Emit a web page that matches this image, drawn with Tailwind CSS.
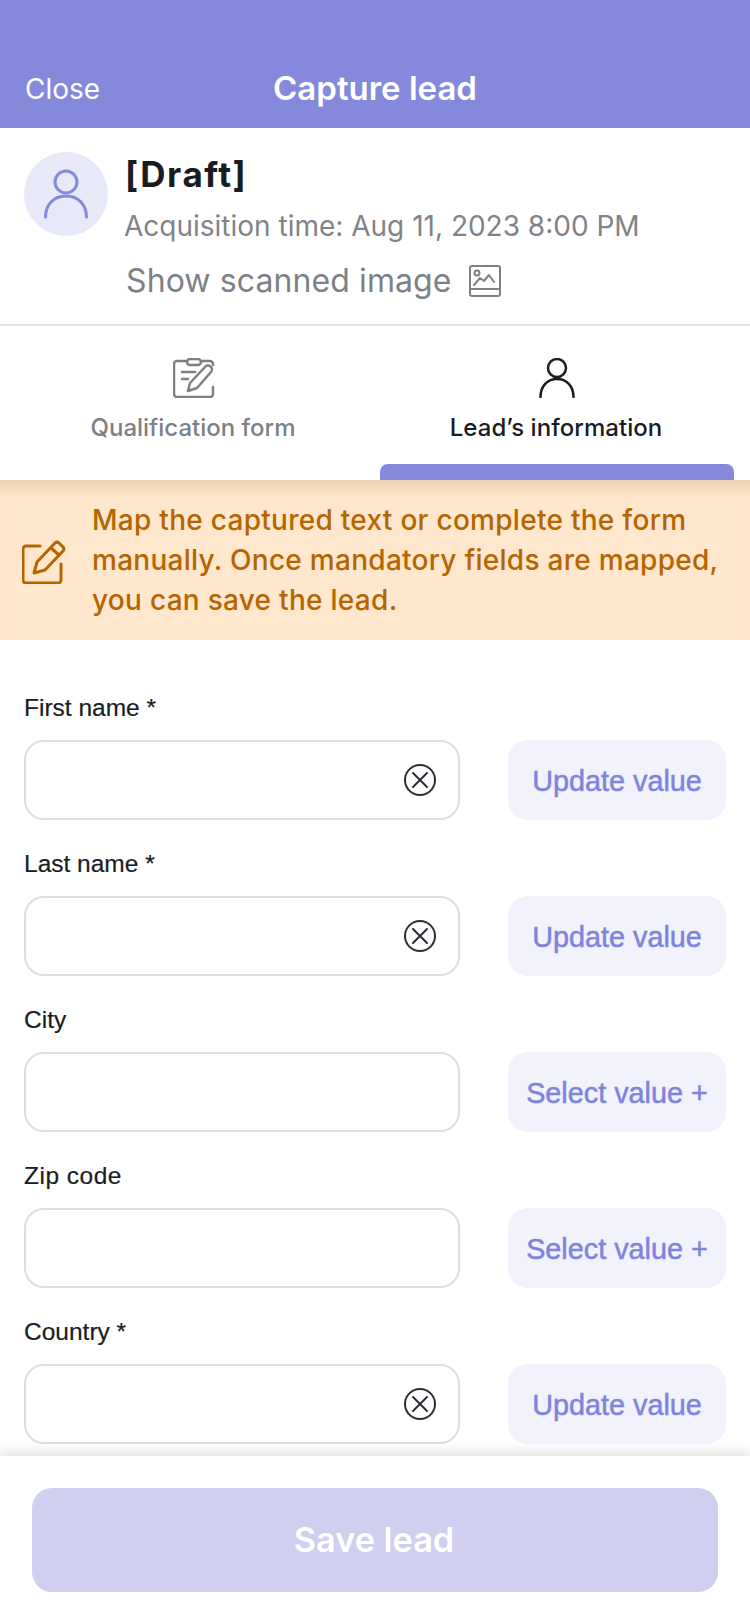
<!DOCTYPE html>
<html lang="en">
<head>
<meta charset="utf-8">
<title>Capture lead</title>
<script src="https://cdn.jsdelivr.net/npm/@tailwindcss/browser@4"></script>
</head>
<body class="bg-white">
<div class="relative w-[750px] h-[1624px] overflow-hidden flex flex-col bg-white font-['Inter',sans-serif]">
  <header class="h-[128px] shrink-0 bg-[#8489dc] text-white relative flex items-end justify-center pb-[20px]">
    <span class="absolute left-[25px] bottom-[21px] text-[28px] leading-[36px]">Close</span>
    <h1 class="text-[33px] leading-[40px] font-semibold">Capture lead</h1>
  </header>

  <section class="h-[198px] shrink-0 border-b-2 border-[#e2e3e5] flex items-start pl-[24px] pt-[24px] gap-[16px]">
    <div class="w-[84px] h-[84px] rounded-full bg-[#e7e8f8] shrink-0 flex items-center justify-center">
      <svg width="46" height="50" viewBox="0 0 46 50" fill="none" stroke="#8489dc" stroke-width="3" stroke-linecap="round"><circle cx="23" cy="13" r="11"/><path d="M2.500 48c0-12 8-21 20.500-21s20.500 9 20.500 21"/></svg>
    </div>
    <div class="flex flex-col">
      <div class="text-[35px] leading-[44px] font-bold text-[#1a1c1f] pl-[1px] tracking-[1.500px]">[Draft]</div>
      <div class="text-[28px] leading-[36px] text-[#808488] mt-[12px]">Acquisition time: Aug 11, 2023 8:00 PM</div>
      <div class="flex items-center gap-[17px] mt-[17px] pl-[2px]">
        <span class="text-[32px] leading-[40px] text-[#7d8185] tracking-[0.1px]">Show scanned image</span>
        <svg width="32" height="32" viewBox="0 0 32 32" fill="none" stroke="#7d8185" stroke-width="2" stroke-linecap="round" stroke-linejoin="round"><rect x="1" y="1" width="30" height="30" rx="2"/><path d="M1 24h30"/><circle cx="8" cy="8" r="2.500"/><path d="M5 20l6-7 4 3 5-6 5 7"/></svg>
      </div>
    </div>
  </section>

  <nav class="h-[154px] shrink-0 flex gap-[10px] px-[16px]">
    <div class="w-[354px] flex flex-col items-center pt-[32px]">
      <svg class="ml-[2px]" width="42" height="40" viewBox="0 0 42 40" fill="none" stroke="#7d8185" stroke-width="2.500" stroke-linecap="round" stroke-linejoin="round"><path d="M13 3H4a3 3 0 0 0-3 3v30a3 3 0 0 0 3 3h33a3 3 0 0 0 3-3v-7"/><path d="M29 3h8a3 3 0 0 1 3 3v1"/><rect x="14" y="1" width="14" height="6" rx="3"/><path d="M9 14h13M9 21h6"/><path d="M15 33l2-8 15-16a3 3 0 0 1 6 5L24 30z"/></svg>
      <span class="text-[24px] leading-[32px] font-medium text-[#7d8185] mt-[14px]">Qualification form</span>
    </div>
    <div class="w-[354px] flex flex-col items-center pt-[32px] relative">
      <svg width="36" height="40" viewBox="0 0 36 40" fill="none" stroke="#1a1c1f" stroke-width="2.500" stroke-linecap="round"><circle cx="18" cy="10" r="9"/><path d="M1.500 39c0-11 7-18 16.500-18s16.500 7 16.500 18"/></svg>
      <span class="text-[24px] leading-[32px] font-medium text-[#1a1c1f] mt-[14px] mr-[2px] tracking-[0.05px]">Lead’s information</span>
      <div class="absolute left-0 right-0 bottom-0 h-[16px] bg-[#8489dc] rounded-t-[8px]"></div>
    </div>
  </nav>

  <section class="h-[160px] shrink-0 bg-[#fee7cc] shadow-[inset_0_18px_14px_-12px_rgba(120,90,50,0.2)] flex items-center pl-[22px] gap-[26px]">
    <svg class="shrink-0 mt-[4px]" width="44" height="44" viewBox="0 0 44 44" fill="none" stroke="#b56500" stroke-width="3" stroke-linecap="round" stroke-linejoin="round"><path d="M18 6H4a3 3 0 0 0-3 3v31a3 3 0 0 0 3 3h32a3 3 0 0 0 3-3V24"/><path d="M12 33l3-11L33 3a3 3 0 0 1 4 0l4 4a3 3 0 0 1 0 4L23 30z"/><path d="M29 8l8 7"/></svg>
    <p class="text-[28px] leading-[40px] font-[550] text-[#b56500] tracking-[0.28px] whitespace-nowrap">Map the captured text or complete the form<br>manually. Once mandatory fields are mapped,<br>you can save the lead.</p>
  </section>

  <main class="flex-1 min-h-0 overflow-hidden px-[24px] pt-[48px] flex flex-col gap-[24px] font-['Liberation_Sans',sans-serif]">
    <div>
      <label class="block text-[24.500px] leading-[40px] text-[#1a1c1f] [-webkit-text-stroke:0.2px_#1a1c1f]">First name *</label>
      <div class="flex items-stretch justify-between mt-[12px] h-[80px]">
        <div class="w-[436px] rounded-[20px] border-2 border-[#dedede] flex items-center justify-end pr-[22px]">
          <svg width="32" height="32" viewBox="0 0 32 32" fill="none" stroke="#2a2f36" stroke-width="2" stroke-linecap="round"><circle cx="16" cy="16" r="15"/><path d="M9 9l14 14M23 9L9 23"/></svg>
        </div>
        <div class="w-[218px] rounded-[20px] bg-[#f1f2fb] flex items-center justify-center pt-[4px] text-[28.800px] text-[#7f83dc] [-webkit-text-stroke:0.5px_#7f83dc]">Update value</div>
      </div>
    </div>
    <div>
      <label class="block text-[24.500px] leading-[40px] text-[#1a1c1f] [-webkit-text-stroke:0.2px_#1a1c1f]">Last name *</label>
      <div class="flex items-stretch justify-between mt-[12px] h-[80px]">
        <div class="w-[436px] rounded-[20px] border-2 border-[#dedede] flex items-center justify-end pr-[22px]">
          <svg width="32" height="32" viewBox="0 0 32 32" fill="none" stroke="#2a2f36" stroke-width="2" stroke-linecap="round"><circle cx="16" cy="16" r="15"/><path d="M9 9l14 14M23 9L9 23"/></svg>
        </div>
        <div class="w-[218px] rounded-[20px] bg-[#f1f2fb] flex items-center justify-center pt-[4px] text-[28.800px] text-[#7f83dc] [-webkit-text-stroke:0.5px_#7f83dc]">Update value</div>
      </div>
    </div>
    <div>
      <label class="block text-[24.500px] leading-[40px] text-[#1a1c1f] [-webkit-text-stroke:0.2px_#1a1c1f]">City</label>
      <div class="flex items-stretch justify-between mt-[12px] h-[80px]">
        <div class="w-[436px] rounded-[20px] border-2 border-[#dedede]"></div>
        <div class="w-[218px] rounded-[20px] bg-[#f1f2fb] flex items-center justify-center pt-[4px] text-[28.800px] text-[#7f83dc] [-webkit-text-stroke:0.5px_#7f83dc] whitespace-nowrap">Select value +</div>
      </div>
    </div>
    <div>
      <label class="block text-[24.500px] leading-[40px] text-[#1a1c1f] [-webkit-text-stroke:0.2px_#1a1c1f] tracking-[0.5px]">Zip code</label>
      <div class="flex items-stretch justify-between mt-[12px] h-[80px]">
        <div class="w-[436px] rounded-[20px] border-2 border-[#dedede]"></div>
        <div class="w-[218px] rounded-[20px] bg-[#f1f2fb] flex items-center justify-center pt-[4px] text-[28.800px] text-[#7f83dc] [-webkit-text-stroke:0.5px_#7f83dc] whitespace-nowrap">Select value +</div>
      </div>
    </div>
    <div>
      <label class="block text-[24.500px] leading-[40px] text-[#1a1c1f] [-webkit-text-stroke:0.2px_#1a1c1f]">Country *</label>
      <div class="flex items-stretch justify-between mt-[12px] h-[80px]">
        <div class="w-[436px] rounded-[20px] border-2 border-[#dedede] flex items-center justify-end pr-[22px]">
          <svg width="32" height="32" viewBox="0 0 32 32" fill="none" stroke="#2a2f36" stroke-width="2" stroke-linecap="round"><circle cx="16" cy="16" r="15"/><path d="M9 9l14 14M23 9L9 23"/></svg>
        </div>
        <div class="w-[218px] rounded-[20px] bg-[#f1f2fb] flex items-center justify-center pt-[4px] text-[28.800px] text-[#7f83dc] [-webkit-text-stroke:0.5px_#7f83dc]">Update value</div>
      </div>
    </div>
  </main>

  <footer class="absolute left-0 right-0 bottom-0 h-[168px] bg-white shadow-[0_-4px_12px_rgba(0,0,0,0.12)] px-[32px] pt-[32px]">
    <div class="h-[104px] rounded-[20px] bg-[#d0cff0] flex items-center justify-center pr-[2px] text-white text-[34.300px] font-semibold">Save lead</div>
  </footer>
</div>
</body>
</html>
